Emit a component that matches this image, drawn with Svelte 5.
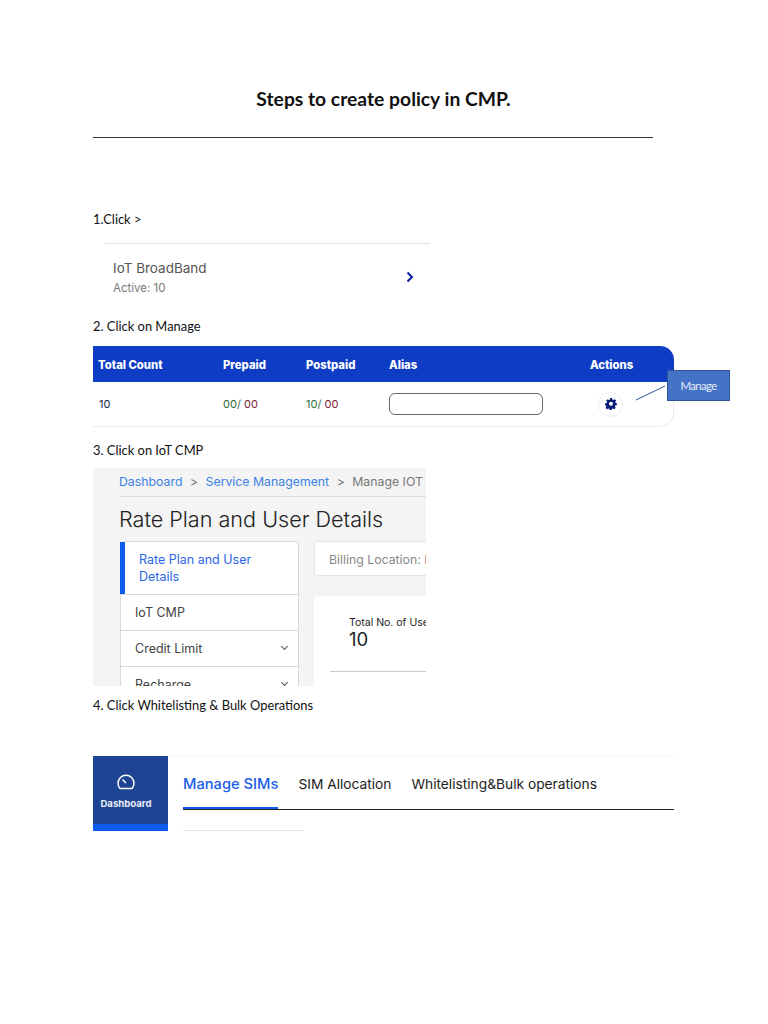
<script>
	const columns = ['Total Count', 'Prepaid', 'Postpaid', 'Alias', 'Actions'];
	const tabs = ['Manage SIMs', 'SIM Allocation', 'Whitelisting&Bulk operations'];
</script>

<div class="page">
	<h1>Steps to create policy in CMP.</h1>
	<hr class="rule" />

	<p class="step first">1.Click &gt;</p>
	<div class="service">
		<div>
			<div class="service-name">IoT BroadBand</div>
			<div class="service-sub">Active: 10</div>
		</div>
		<svg class="chevron" width="8" height="12" viewBox="0 0 8 12">
			<path d="M1.5 1.5 6 6l-4.500 4.500" fill="none" stroke="#0a1f9c" stroke-width="2" />
		</svg>
	</div>

	<p class="step second">2. Click on Manage</p>
	<div class="table-wrap">
		<div class="table">
			<div class="row head">
				{#each columns as col}
					<div>{col}</div>
				{/each}
			</div>
			<div class="row body">
				<div class="count">10</div>
				<div><span class="green">00/</span> <span class="red">00</span></div>
				<div><span class="green">10/</span> <span class="red">00</span></div>
				<div><div class="alias"></div></div>
				<div class="action-cell">
					<span class="gear">
						<svg width="12" height="12" viewBox="0 0 24 24">
							<path fill="#0b1f7a" fill-rule="evenodd" d="M10 1h4l.7 3.200 2 .8 2.800-1.700 2.800 2.800-1.700 2.800.8 2L23.800 11.700v3.600l-3.200.7-.8 2 1.700 2.800-2.800 2.800-2.800-1.700-2 .8-.7 3.200h-4l-.7-3.200-2-.8-2.800 1.700-2.800-2.800 1.700-2.800-.8-2L.2 15.300v-3.600l3.200-.7.8-2-1.700-2.800 2.800-2.800 2.800 1.700 2-.8zM12 8.500a4 4 0 1 0 0 8 4 4 0 0 0 0-8z" transform="translate(0 -1)" />
						</svg>
					</span>
				</div>
			</div>
		</div>
		<svg class="leader" width="32" height="16" viewBox="0 0 32 16">
			<path d="M1 15 30 1" stroke="#2f5597" stroke-width="1" fill="none" />
		</svg>
		<div class="callout">Manage</div>
	</div>

	<p class="step third">3. Click on IoT CMP</p>
	<div class="shot">
		<div class="crumbs">
			<span class="link">Dashboard</span>
			<span class="sep">&gt;</span>
			<span class="link">Service Management</span>
			<span class="sep">&gt;</span>
			<span class="here">Manage IOT</span>
		</div>
		<div class="shot-title">Rate Plan and User Details</div>
		<div class="shot-main">
			<div class="menu">
				<div class="menu-item active">Rate Plan and User Details</div>
				<div class="menu-item plain">IoT CMP</div>
				<div class="menu-item plain">Credit Limit <span class="caret"></span></div>
				<div class="menu-item plain">Recharge <span class="caret"></span></div>
			</div>
			<div class="shot-right">
				<div class="billing">Billing Location: I</div>
				<div class="users">
					<div class="users-label">Total No. of Users</div>
					<div class="users-value">10</div>
					<div class="users-line"></div>
				</div>
			</div>
		</div>
	</div>

	<p class="step fourth">4. Click Whitelisting &amp; Bulk Operations</p>
	<div class="nav">
		<div class="dash">
			<svg width="20" height="18" viewBox="0 0 20 18">
				<path d="M4 15.500A8 8 0 1 1 16 15.500Z" fill="none" stroke="#fff" stroke-width="1.500" stroke-linejoin="round" />
				<path d="M6.500 6.500 10 10" stroke="#fff" stroke-width="1.500" />
			</svg>
			<span>Dashboard</span>
		</div>
		<div class="nav-right">
			<div class="tabs">
				{#each tabs as tab, i}
					<div class="tab" class:on={i === 0}>{tab}</div>
				{/each}
			</div>
			<div class="under"></div>
		</div>
	</div>
</div>

<style>
	:global(body) {
		margin: 0;
		background: #fff;
	}

	.page {
		box-sizing: border-box;
		width: 768px;
		height: 1024px;
		padding: 88px 0 0 93px;
		font-family: Inter, 'Liberation Sans', sans-serif;
		overflow: hidden;
	}

	h1 {
		width: 581px;
		margin: 0;
		font: 700 19.300px/21px Lato, 'Open Sans', sans-serif;
		text-align: center;
		color: #111;
	}

	.rule {
		width: 560px;
		margin: 28px 0 0;
		border: 0;
		border-top: 1px solid #333;
	}

	.step {
		margin: 0;
		font: 400 12.900px/16px Lato, 'Open Sans', sans-serif;
		color: #111;
	}

	.first {
		margin-top: 73px;
	}

	.second {
		margin-top: 10px;
	}

	.third {
		margin-top: 15px;
	}

	.fourth {
		margin-top: 11px;
	}

	.service {
		display: flex;
		align-items: center;
		justify-content: space-between;
		width: 325px;
		height: 65px;
		box-sizing: border-box;
		margin: 16px 0 0 12px;
		padding: 2px 16px 0 8px;
		border-top: 1px solid #e2e2e2;
	}

	.service-name {
		font-size: 13.500px;
		line-height: 18px;
		color: #555;
	}

	.service-sub {
		margin-top: 4px;
		font-size: 11.500px;
		line-height: 14px;
		color: #777;
	}

	.table-wrap {
		position: relative;
		margin-top: 12px;
	}

	.table {
		width: 581px;
		height: 81px;
		box-sizing: border-box;
		border: 1px solid #ececec;
		border-top: 0;
		border-left: 0;
		border-radius: 0 14px 14px 0;
	}

	.row {
		display: grid;
		grid-template-columns: 125px 83px 83px 201px 1fr;
		align-items: center;
		padding-left: 5px;
	}

	.head {
		box-sizing: border-box;
		height: 36px;
		margin-right: -1px;
		padding-top: 2px;
		background: #0f3cc4;
		border-radius: 0 14px 0 0;
		font-size: 11.300px;
		font-weight: 800;
		color: #fff;
	}

	.body {
		height: 44px;
		font-size: 11px;
		color: #1c2a4a;
	}

	.count {
		padding-left: 1px;
	}

	.green {
		color: #2f6b3a;
	}

	.red {
		color: #7b2136;
	}

	.alias {
		width: 152px;
		height: 20px;
		border: 1.500px solid #666;
		border-radius: 6px;
		background: #fff;
	}

	.action-cell {
		padding-left: 8px;
	}

	.gear {
		display: flex;
		align-items: center;
		justify-content: center;
		width: 23px;
		height: 23px;
		border: 1px solid #eee;
		border-radius: 50%;
	}

	.leader {
		position: absolute;
		left: 542px;
		top: 39px;
	}

	.callout {
		position: absolute;
		left: 574px;
		top: 24px;
		width: 63px;
		height: 31px;
		box-sizing: border-box;
		border: 1px solid #2f5597;
		background: #4472c4;
		font: 400 11.500px/29px Lato, 'Open Sans', sans-serif;
		letter-spacing: -0.7px;
		text-align: center;
		color: #e6ecf7;
	}

	.shot {
		box-sizing: border-box;
		width: 333px;
		height: 218px;
		margin-top: 10px;
		padding: 5px 0 0 26px;
		background: #f4f4f4;
		overflow: hidden;
	}

	.crumbs {
		display: flex;
		gap: 7.500px;
		height: 23px;
		width: 307px;
		border-bottom: 1px solid #ddd;
		font-size: 12.300px;
		line-height: 17px;
		white-space: nowrap;
	}

	.link {
		color: #3b82e6;
	}

	.sep,
	.here {
		color: #777;
	}

	.shot-title {
		margin-top: 8px;
		font-size: 21.600px;
		font-weight: 300;
		line-height: 28px;
		color: #222;
		white-space: nowrap;
	}

	.shot-main {
		display: flex;
		gap: 15px;
		margin: 8px 0 0 1px;
	}

	.menu {
		flex: none;
		width: 179px;
		box-sizing: border-box;
		border: 1px solid #d8d8d8;
		border-radius: 4px 4px 0 0;
		background: #fff;
	}

	.menu-item {
		display: flex;
		align-items: center;
		justify-content: space-between;
		box-sizing: border-box;
		font-size: 12.500px;
		line-height: 17px;
		color: #444;
	}

	.menu-item + .menu-item {
		border-top: 1px solid #d8d8d8;
	}

	.active {
		height: 52px;
		padding: 0 30px 0 14px;
		border-left: 5px solid #0d5cf0;
		margin-left: -1px;
		color: #2a66e8;
	}

	.plain {
		height: 36px;
		padding: 0 11px 1px 14px;
	}

	.caret {
		width: 4px;
		height: 4px;
		margin-top: -3px;
		border-right: 1px solid #555;
		border-bottom: 1px solid #555;
		transform: rotate(45deg);
	}

	.shot-right {
		flex: none;
		width: 200px;
	}

	.billing {
		height: 35px;
		box-sizing: border-box;
		padding-left: 14px;
		border: 1px solid #e4e4e4;
		border-radius: 4px;
		background: #fff;
		font-size: 12.300px;
		line-height: 35px;
		color: #888;
	}

	.users {
		height: 120px;
		box-sizing: border-box;
		margin-top: 20px;
		padding: 20px 0 0 35px;
		border-radius: 4px;
		background: #fff;
	}

	.users-label {
		font-size: 10.500px;
		line-height: 14px;
		color: #222;
		white-space: nowrap;
	}

	.users-value {
		font-size: 18.500px;
		line-height: 19px;
		color: #222;
	}

	.users-line {
		margin: 22px 0 0 -19px;
		border-top: 1px solid #ccc;
	}

	.nav {
		display: flex;
		margin-top: 43px;
		width: 581px;
	}

	.dash {
		display: flex;
		flex: none;
		flex-direction: column;
		align-items: center;
		width: 75px;
		height: 75px;
		box-sizing: border-box;
		padding: 17px 9px 0 0;
		background: #1f4494;
		border-bottom: 7px solid #0d5cf0;
		font-size: 9.600px;
		font-weight: 700;
		color: #e8edf7;
	}

	.dash span {
		margin-top: 7px;
	}

	.nav-right {
		flex: 1;
		padding-left: 15px;
		border-top: 1px solid #f5f5f5;
	}

	.tabs {
		display: flex;
		gap: 20px;
		height: 52px;
		border-bottom: 1px solid #222;
	}

	.tab {
		font-size: 13.750px;
		line-height: 54px;
		color: #222;
		white-space: nowrap;
	}

	.on {
		box-sizing: border-box;
		height: 52px;
		border-bottom: 2px solid #0d5cf0;
		font-size: 14.700px;
		font-weight: 500;
		color: #1a5ee8;
	}

	.under {
		width: 120px;
		margin-top: 20px;
		border-top: 1px solid #e2e2e2;
	}
</style>
